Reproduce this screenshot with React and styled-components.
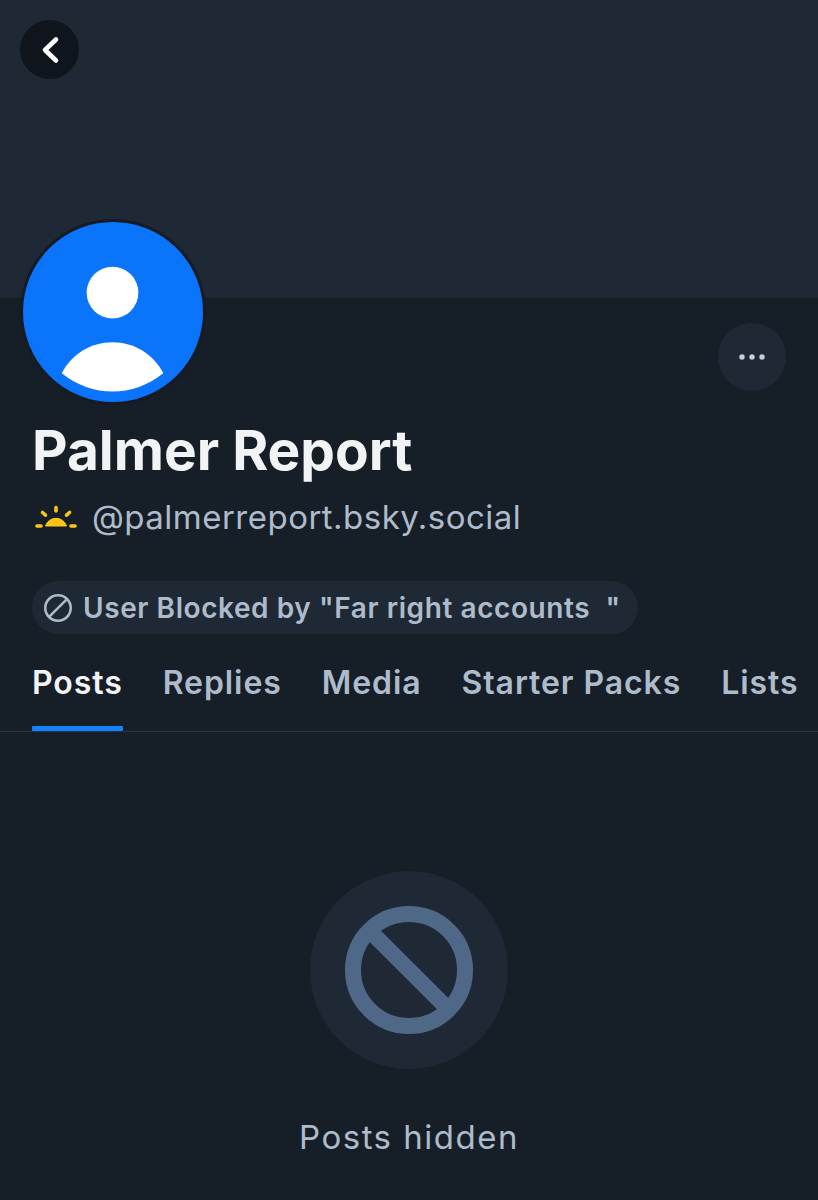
import React from 'react';
import styled, { createGlobalStyle } from 'styled-components';

const Global = createGlobalStyle`
  html, body { margin: 0; padding: 0; background: #161e27; }
  body { font-family: Inter, "Noto Sans", sans-serif; }
`;

const Page = styled.div`
  position: relative;
  width: 818px;
  height: 1200px;
  overflow: hidden;
  background: #161e27;
`;

const Banner = styled.div`
  height: 298px;
  box-sizing: border-box;
  padding: 20px;
  background: #1e2935;
  border-bottom: 1px solid #1b242f;
`;

const BackButton = styled.button`
  width: 59px;
  height: 59px;
  padding: 0;
  border: 0;
  border-radius: 50%;
  background: #0f151c;
  display: flex;
  align-items: center;
  justify-content: center;
`;

const AvatarFrame = styled.div`
  position: absolute;
  left: 20px;
  top: 219px;
  width: 186px;
  height: 186px;
  box-sizing: border-box;
  border: 3.5px solid #141b24;
  border-radius: 50%;
  overflow: hidden;
  background: #0a74fb;
`;

const Profile = styled.section`
  padding: 0 32px;
`;

const ActionRow = styled.div`
  display: flex;
  justify-content: flex-end;
  padding: 25px 0 0;
`;

const MoreButton = styled.button`
  width: 68px;
  height: 68px;
  padding: 0;
  border: 0;
  border-radius: 50%;
  background: #1e2935;
  display: flex;
  align-items: center;
  justify-content: center;
`;

const Name = styled.h1`
  margin: 29px 0 0 0;
  font-size: 55px;
  line-height: 60px;
  font-weight: 700;
  letter-spacing: 0;
  color: #f1f3f5;
`;

const HandleRow = styled.div`
  display: flex;
  align-items: center;
  gap: 15px;
  margin-top: 15px;
  padding-left: 3px;
  height: 44px;
`;

const Handle = styled.span`
  font-size: 33px;
  line-height: 44px;
  font-weight: 400;
  letter-spacing: 0.48px;
  color: #aebbcb;
`;

const Pill = styled.div`
  display: inline-flex;
  align-items: center;
  gap: 11px;
  height: 53px;
  margin-top: 42px;
  padding: 0 17px 0 12px;
  border-radius: 27px;
  background: #1e2935;
  font-size: 28px;
  letter-spacing: 0.58px;
  font-weight: 600;
  color: #aebbcb;
  white-space: pre;
`;

const Tabs = styled.nav`
  display: flex;
  gap: 40px;
  height: 98px;
  padding: 0 0 0 32px;
  box-sizing: border-box;
  border-bottom: 1px solid #28333f;
`;

const Tab = styled.div`
  position: relative;
  height: 97px;
  padding-top: 26px;
  box-sizing: border-box;
  font-size: 32px;
  line-height: 46px;
  font-weight: 600;
  letter-spacing: 0.92px;
  white-space: nowrap;
  color: ${p => (p.$active ? '#f1f3f5' : '#aebbcb')};
  ${p => p.$active && `
    &::after {
      content: "";
      position: absolute;
      left: 0;
      right: 0;
      bottom: 0;
      height: 5px;
      background: #1083fe;
      border-radius: 1px;
    }
  `}
`;

const Empty = styled.section`
  display: flex;
  flex-direction: column;
  align-items: center;
  padding-top: 139px;
`;

const IconDisc = styled.div`
  width: 198px;
  height: 198px;
  border-radius: 50%;
  background: #1e2935;
  display: flex;
  align-items: center;
  justify-content: center;
`;

const EmptyText = styled.div`
  margin-top: 46px;
  font-size: 33px;
  line-height: 44px;
  color: #aebbcb;
  letter-spacing: 1.5px;
`;

const Sunrise = () => (
  <svg width="42" height="24" viewBox="0 0 42 24" fill="none">
    <path d="M10.5 21a11 11 0 0 1 21 0z" fill="#fcc419" stroke="#fcc419" strokeWidth="1" strokeLinejoin="round" />
    <g stroke="#fcc419" strokeWidth="3.6" strokeLinecap="round">
      <path d="M21 2.5v3.5" />
      <path d="M7.5 7.5l3 2.6" />
      <path d="M34.5 7.5l-3 2.6" />
      <path d="M2 21h4" />
      <path d="M36 21h4" />
    </g>
  </svg>
);

const BlockIcon = ({ size, stroke, sw, mirrored }) => (
  <svg width={size} height={size} viewBox="0 0 100 100" fill="none">
    <circle cx="50" cy="50" r={50 - sw / 2} stroke={stroke} strokeWidth={sw} />
    <path d={mirrored ? 'M81 19L19 81' : 'M19 19L81 81'} stroke={stroke} strokeWidth={sw} />
  </svg>
);

export default function App() {
  return (
    <Page>
      <Global />
      <Banner>
        <BackButton aria-label="Back">
          <svg width="20" height="30" viewBox="0 0 20 30" fill="none">
            <path d="M16 4.5L5 15 16 25.5" stroke="#fff" strokeWidth="4.6" strokeLinecap="round" strokeLinejoin="round" />
          </svg>
        </BackButton>
      </Banner>
      <AvatarFrame>
        <svg width="179" height="179" viewBox="0 0 180 180">
          <circle cx="90" cy="71" r="26" fill="#fff" />
          <path d="M39 152C49 133 68 121 90 121s41 12 51 31C126 164 108 170.5 90 170.5S54 164 39 152z" fill="#fff" />
        </svg>
      </AvatarFrame>
      <Profile>
        <ActionRow>
          <MoreButton aria-label="More">
            <svg width="28" height="8" viewBox="0 0 28 8">
              <circle cx="4" cy="4" r="2.7" fill="#c5cfdb" />
              <circle cx="14" cy="4" r="2.7" fill="#c5cfdb" />
              <circle cx="24" cy="4" r="2.7" fill="#c5cfdb" />
            </svg>
          </MoreButton>
        </ActionRow>
        <Name>Palmer Report</Name>
        <HandleRow>
          <Sunrise />
          <Handle>@palmerreport.bsky.social</Handle>
        </HandleRow>
        <Pill>
          <BlockIcon size={28} stroke="#aebbcb" sw={9} mirrored />
          <span>User Blocked by "Far right accounts  "</span>
        </Pill>
      </Profile>
      <Tabs>
        <Tab $active>Posts</Tab>
        <Tab>Replies</Tab>
        <Tab>Media</Tab>
        <Tab>Starter Packs</Tab>
        <Tab>Lists</Tab>
      </Tabs>
      <Empty>
        <IconDisc>
          <BlockIcon size={128} stroke="#4f6888" sw={12.5} />
        </IconDisc>
        <EmptyText>Posts hidden</EmptyText>
      </Empty>
    </Page>
  );
}
